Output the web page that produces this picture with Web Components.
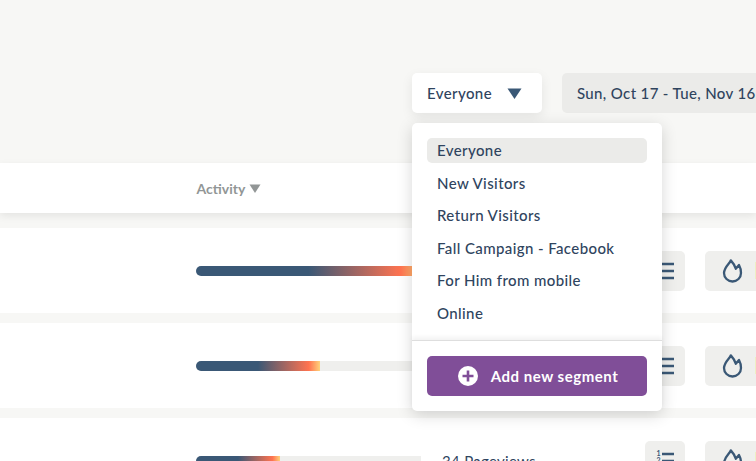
<!DOCTYPE html>
<html>
<head>
<meta charset="utf-8">
<style>
  html, body { margin: 0; height: 100%; overflow: hidden; background: #f7f7f5; }
  body { font-family: Lato, "Open Sans", sans-serif; color: #2f445e; position: relative; width: 756px; height: 461px; }
</style>
</head>
<body>
<app-page></app-page>
<script>
class filterBar extends HTMLElement {
  constructor() {
    super();
    this.attachShadow({ mode: 'open' });
    this.shadowRoot.innerHTML = `
      <style>
        :host { display: flex; height: 163px; box-sizing: border-box; padding: 73px 0 0 412px; gap: 20px; width: 900px; }
        .seg, .date { height: 40px; box-sizing: border-box; border-radius: 5px; display: flex; align-items: center; font-size: 15px; font-weight: 500; letter-spacing: .4px; }
        .seg { width: 130px; background: #fff; padding-left: 15px; box-shadow: 0 4px 12px rgba(0,0,0,.08); }
        .seg svg { margin-left: 15px; }
        .date { width: 260px; background: #ebebe9; padding-left: 15px; letter-spacing: .36px; }
      </style>
      <div class="seg">Everyone<svg width="15" height="11" viewBox="0 0 15 11"><path d="M0.5 0.5h14L7.5 11z" fill="#3a5876"/></svg></div>
      <div class="date">Sun, Oct 17 - Tue, Nov 16</div>
    `;
  }
}

class tableHead extends HTMLElement {
  constructor() {
    super();
    this.attachShadow({ mode: 'open' });
    this.shadowRoot.innerHTML = `
      <style>
        :host { display: flex; align-items: center; height: 50px; box-sizing: border-box; padding: 0 0 0 196.5px; background: #fff; box-shadow: 0 3px 8px rgba(0,0,0,.08); position: relative; font-size: 14px; font-weight: 700; color: #929696; margin-bottom: 15px; }
        svg { margin: 0 0 0 4px; }
      </style>
      Activity<svg width="12" height="9" viewBox="0 0 12 9"><path d="M0.5 0.5h11L6 9z" fill="#929696"/></svg>
    `;
  }
}

class activityRow extends HTMLElement {
  constructor() {
    super();
    const fill = this.getAttribute('fill');
    const label = this.getAttribute('label') || '';
    this.attachShadow({ mode: 'open' });
    this.shadowRoot.innerHTML = `
      <style>
        :host { display: grid; grid-template-columns: 225px 224px 40px 80px; height: 85px; margin-bottom: 10px; background: #fff; padding-left: 196px; align-items: center; width: 600px; }
        .track { height: 10px; background: #efefed; border-radius: 5px 0 0 5px; overflow: hidden; margin-top: 1px; }
        .fill { height: 100%; width: ${fill}; background: linear-gradient(90deg, #3a5876 0, #3a5876 50%, #ff7350 91%, #ffd27a 100%); }
        .label { font-size: 15px; padding-left: 21px; letter-spacing: .3px; }
        .btn { height: 40px; border-radius: 5px; background: #efefed; display: flex; align-items: center; justify-content: center; }
        .flame { margin-left: 20px; justify-content: flex-start; padding-left: 17px; gap: 11px; }
        .flame svg, .flame i { flex: none; }
        .flame i { width: 6px; height: 17px; background: #eef0c4; }
      </style>
      <div class="track"><div class="fill"></div></div>
      <div class="label">${label}</div>
      <div class="btn">
        <svg width="22" height="24" viewBox="0 0 22 24" fill="none" stroke="#3a5876" stroke-width="2.600"><text x="2.500" y="6.500" font-size="7" font-weight="700" fill="#3a5876" stroke="none" font-family="Lato">1</text><text x="2.500" y="14" font-size="7" font-weight="700" fill="#3a5876" stroke="none" font-family="Lato">2</text><path d="M8 5h12M8 12h12M8 19h12"/></svg>
      </div>
      <div class="btn flame">
        <svg width="22" height="26" viewBox="0 0 22 26" fill="none" stroke="#3a5876" stroke-width="2.300" stroke-linejoin="round"><path d="M8.800 2.400C8 5.500 2.500 8.500 2 15a8.500 8.500 0 0 0 17 0C19 12 18.400 9.500 17 7L13.800 10.800C13 7.500 11 4.800 8.800 2.400z"/></svg>
        <i></i>
      </div>
    `;
  }
}

class segmentItem extends HTMLElement {
  constructor() {
    super();
    this.attachShadow({ mode: 'open' });
    this.shadowRoot.innerHTML = `
      <style>
        :host { display: flex; align-items: center; height: 25px; box-sizing: border-box; padding: 0 0 1px 10px; border-radius: 5px; font-size: 15px; font-weight: 500; letter-spacing: .4px; margin-bottom: 7.500px; }
        :host([active]) { background: #ebebe9; }
      </style>
      <slot></slot>
    `;
  }
}

class segmentMenu extends HTMLElement {
  constructor() {
    super();
    this.attachShadow({ mode: 'open' });
    this.shadowRoot.innerHTML = `
      <style>
        :host { display: block; position: absolute; left: 412px; top: 123px; width: 250px; height: 288px; background: #fff; border-radius: 5px; box-shadow: 0 4px 16px rgba(0,0,0,.16); }
        .list { height: 217px; box-sizing: border-box; padding: 15px 15px 0; }
        .foot { border-top: 1px solid #dedede; box-shadow: 0 -3px 4px rgba(0,0,0,.05); padding: 15px; }
        .add { height: 40px; box-sizing: border-box; padding-left: 2px; border-radius: 5px; background: #804e98; color: #fff; display: flex; align-items: center; justify-content: center; gap: 13px; font-size: 15px; font-weight: 700; letter-spacing: .52px; }
      </style>
      <div class="list"><slot></slot></div>
      <div class="foot">
        <div class="add">
          <svg width="20" height="20" viewBox="0 0 20 20"><circle cx="10" cy="10" r="10" fill="#fff"/><path d="M10 4.500v11M4.500 10h11" stroke="#804e98" stroke-width="2.600"/></svg>
          Add new segment
        </div>
      </div>
    `;
  }
}

class appPage extends HTMLElement {
  constructor() {
    super();
    this.attachShadow({ mode: 'open' });
    this.shadowRoot.innerHTML = `
      <style>
        :host { display: block; width: 756px; height: 461px; overflow: hidden; position: relative; }
      </style>
      <filter-bar></filter-bar>
      <table-head></table-head>
      <activity-row fill="100%"></activity-row>
      <activity-row fill="55%"></activity-row>
      <activity-row fill="37.500%" label="34 Pageviews"></activity-row>
      <segment-menu>
        <segment-item active>Everyone</segment-item>
        <segment-item>New Visitors</segment-item>
        <segment-item>Return Visitors</segment-item>
        <segment-item>Fall Campaign - Facebook</segment-item>
        <segment-item>For Him from mobile</segment-item>
        <segment-item>Online</segment-item>
      </segment-menu>
    `;
  }
}

customElements.define('filter-bar', filterBar);
customElements.define('table-head', tableHead);
customElements.define('activity-row', activityRow);
customElements.define('segment-item', segmentItem);
customElements.define('segment-menu', segmentMenu);
customElements.define('app-page', appPage);
</script>
</body>
</html>
